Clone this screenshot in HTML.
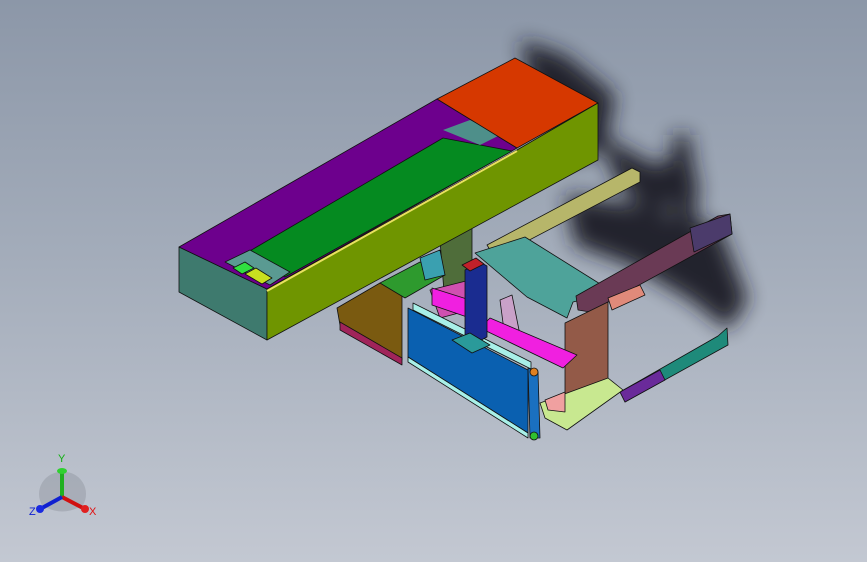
<!DOCTYPE html>
<html><head><meta charset="utf-8"><style>
html,body{margin:0;padding:0;width:867px;height:562px;overflow:hidden}
body{background:linear-gradient(180deg,#8c97a8 0%,#a3acba 45%,#c3c8d2 100%)}
svg{position:absolute;left:0;top:0}
</style></head><body>
<svg width="867" height="562" viewBox="0 0 867 562" xmlns="http://www.w3.org/2000/svg">
<defs>
<filter id="bl" x="-50%" y="-50%" width="200%" height="200%"><feGaussianBlur stdDeviation="10"/></filter>
</defs>
<!-- shadow -->
<g filter="url(#bl)" fill="#1c1f26" opacity="0.95">
<polygon points="520,40 565,55 615,95 605,150 565,160 535,100"/>
<polygon points="600,135 655,165 690,150 700,195 650,215 615,180"/>
<polygon points="565,195 640,205 720,228 748,300 728,330 690,300 630,265 575,245"/>
<polygon points="672,135 690,135 698,230 676,225"/>
</g>
<g stroke="#111" stroke-width="0.8" stroke-linejoin="round">
<polygon points="440,240 472,228 472,300 445,305" fill="#4f6d3a"/>
<polygon points="337,308 380,283 402,295 402,360 340,325" fill="#7a5a10"/>
<polygon points="340,322 402,358 402,365 340,330" fill="#a0245a"/>
<polygon points="380,283 420,262 445,275 405,298" fill="#2e9a2e"/>
<polygon points="420,258 440,250 445,275 425,280" fill="#3aa0b0"/>
<polygon points="487,245 632,168 640,172 640,182 495,258" fill="#b7b66a"/>
<polygon points="475,253 525,237 613,292 573,302 567,318 527,297" fill="#4ea39a"/>
<polygon points="576,296 718,216 730,214 732,234 590,312 578,310" fill="#6a3a55"/>
<polygon points="690,228 730,214 732,234 694,252" fill="#4b3b6b"/>
<polygon points="608,298 640,285 645,295 612,310" fill="#e08a7a"/>
<polygon points="565,323 608,302 608,393 565,417" fill="#935a48"/>
<polygon points="620,392 718,336 727,328 728,345 625,402" fill="#1e8a7a"/>
<polygon points="620,392 660,370 665,380 625,402" fill="#6a2a9a"/>
<polygon points="540,403 608,378 623,390 567,430 545,418" fill="#c8e890"/>
<polygon points="545,400 565,392 565,412 548,410" fill="#f0a0a0"/>
<polygon points="430,290 470,280 470,310 440,318" fill="#d050b0"/>
<polygon points="500,300 512,295 520,335 505,338" fill="#c9a1c8"/>
<polygon points="432,288 470,300 470,318 432,305" fill="#f020e0"/>
<polygon points="480,328 490,318 577,355 563,368" fill="#f020e0"/>
<polygon points="413,303 531,362 531,369 413,310" fill="#a8f0e8"/>
<polygon points="408,308 528,370 528,433 408,357" fill="#0a60b0"/>
<polygon points="408,357 528,433 528,438 408,362" fill="#a8f0e8"/>
<polygon points="528,368 538,372 540,438 530,438" fill="#1a70c0"/>
<circle cx="534" cy="372" r="4" fill="#e08020"/>
<circle cx="534" cy="436" r="4" fill="#30c030"/>
<polygon points="465,270 480,262 487,266 487,337 472,345 465,340" fill="#1a2c90"/>
<polygon points="462,265 476,258 484,264 470,271" fill="#c0202a"/>
<polygon points="452,340 470,333 490,345 472,353" fill="#2a9a9a"/>
<polygon points="179,247 267,289 267,340 179,292" fill="#3e7a6e"/>
<polygon points="179,247 437,99 517,148 267,289" fill="#6d008d"/>
<polygon points="248,252 443,138 512,151 285,277" fill="#058a20"/>
<polygon points="443,130 470,120 500,135 480,145" fill="#4e8f8a" stroke="none"/>
<polygon points="225,262 250,250 290,272 270,285" fill="#5a9a92"/>
<polygon points="233,268 245,262 254,268 242,274" fill="#30e040"/>
<polygon points="245,274 256,268 272,278 262,284" fill="#c8e020"/>
<polygon points="437,99 515,58 598,103 517,148" fill="#d63800"/>
<polygon points="267,289 517,150 598,103 598,160 267,340" fill="#6f9500"/>
<polyline points="267,291 517,151" fill="none" stroke="#e8e060" stroke-width="2"/>
</g>
<g>
<path d="M42,505 A22,22 0 0 1 62,472 A22,22 0 0 1 83,505 Q62,518 42,505Z" fill="#8a8f98" opacity="0.4"/>
<line x1="62" y1="497" x2="62" y2="472" stroke="#20b020" stroke-width="4"/>
<ellipse cx="62" cy="471" rx="5" ry="3" fill="#30d030"/>
<line x1="62" y1="497" x2="83" y2="508" stroke="#d01010" stroke-width="4"/>
<ellipse cx="85" cy="509" rx="4" ry="4" fill="#e02020"/>
<line x1="62" y1="497" x2="42" y2="508" stroke="#1020d0" stroke-width="4"/>
<ellipse cx="40" cy="509" rx="4" ry="4" fill="#1a2ae0"/>
<text x="58" y="462" font-family="Liberation Sans,sans-serif" font-size="11" fill="#10b010">Y</text>
<text x="89" y="515" font-family="Liberation Sans,sans-serif" font-size="11" fill="#e01010">X</text>
<text x="29" y="515" font-family="Liberation Sans,sans-serif" font-size="11" fill="#1020d0">Z</text>
</g>
</svg>
</body></html>
